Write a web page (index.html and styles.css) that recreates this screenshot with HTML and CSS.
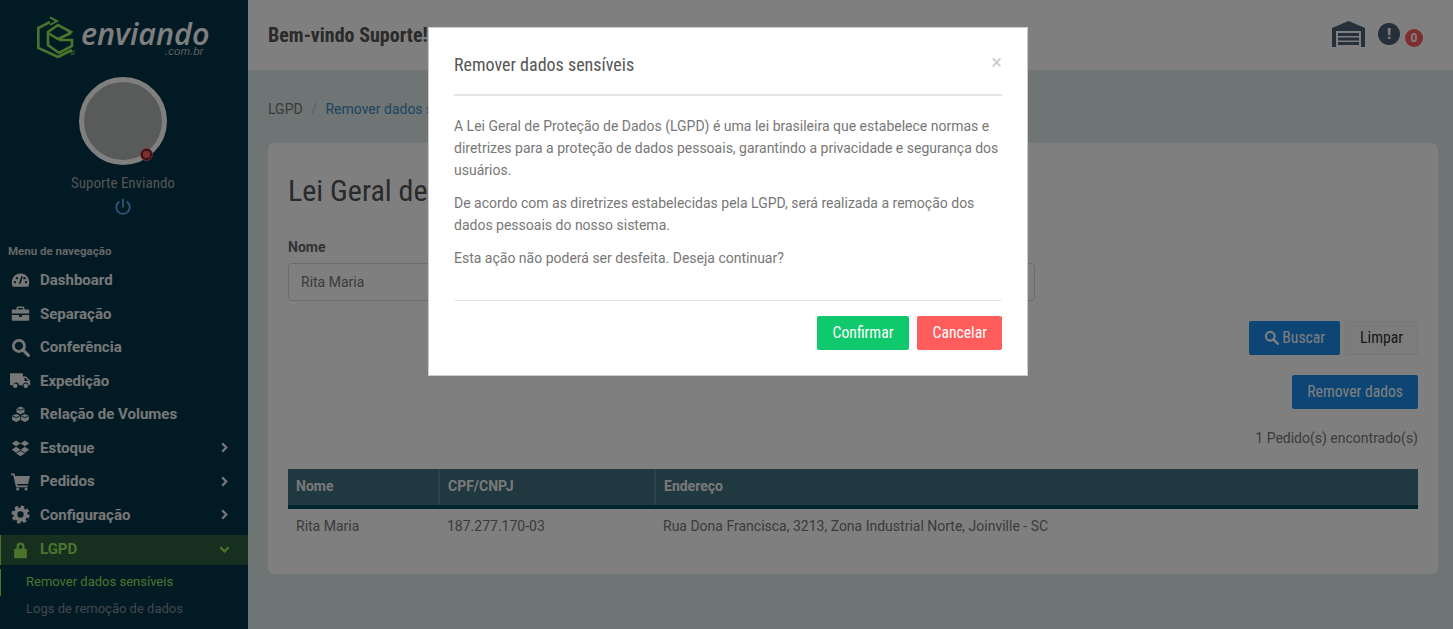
FILE: index.html
```html
<!DOCTYPE html>
<html lang="pt-BR">

<head>
    <meta charset="UTF-8" />
    <meta name="viewport" content="width=device-width, initial-scale=1.0" />
    <title>Remover dados sensíveis</title>
    <link rel="stylesheet" href="styles.css">
</head>

<body>
    <div class="app">
        <!-- menu lateral -->
        <aside class="sidebar">
            <div class="brand">
                <svg class="brand-mark" viewBox="0 0 38 42" fill="none" stroke="#96e85a" stroke-width="2.600">
                    <path d="M13 6 L1.300 12 V32 L21 41 L35 34" />
                    <path d="M13 1.500 L20 5 L13 9" stroke-width="2" />
                    <path d="M30 19 L34 16 L21 9 L11 16 V29 L22 37 L35 30 V24 H22" />
                    <path d="M11 17 L21 23 L34 17" />
                    <path d="M33 37 L38 34.500 M34 39 L38 37" stroke-width="1" />
                </svg>
                <div class="brand-text">
                    <span class="brand-name">enviando</span>
                    <span class="brand-sub">.com.br</span>
                </div>
            </div>
            <div class="avatar">
                <span class="avatar-status"></span>
            </div>
            <div class="user-name">Suporte Enviando</div>
            <svg class="power" viewBox="0 0 24 24" fill="none" stroke="#5fb4ff" stroke-width="2" stroke-linecap="round">
                <path d="M12 3v9" />
                <path d="M7 6a8 8 0 1 0 10 0" />
            </svg>
            <div class="nav-title">Menu de navegação</div>
            <ul class="nav">
                <li class="nav-item">
                    <svg class="nav-icon" viewBox="0 0 24 24"><path d="M12 3C5.400 3 1 8.400 1 14.500c0 2.200.5 4 1.500 5.500h19c1-1.500 1.500-3.300 1.500-5.500C23 8.400 18.600 3 12 3z" /><path d="M11 16 L14 6.500" class="cut" /><circle cx="5" cy="14" r="1.500" class="hole" /><circle cx="7.500" cy="9" r="1.500" class="hole" /><circle cx="19" cy="14" r="1.500" class="hole" /><circle cx="17" cy="9" r="1.500" class="hole" /></svg>
                    Dashboard
                </li>
                <li class="nav-item">
                    <svg class="nav-icon" viewBox="0 0 24 24"><path d="M9 3h6a2 2 0 0 1 2 2v2h5a1 1 0 0 1 1 1v4H1V8a1 1 0 0 1 1-1h5V5a2 2 0 0 1 2-2zm0 2v2h6V5zM1 14h9v2h4v-2h9v6a1 1 0 0 1-1 1H2a1 1 0 0 1-1-1z" /></svg>
                    Separação
                </li>
                <li class="nav-item">
                    <svg class="nav-icon" viewBox="0 0 24 24"><circle cx="10" cy="10" r="7" fill="none" stroke="currentColor" stroke-width="3.600" /><path d="M15 15l7 7" stroke="currentColor" stroke-width="4" stroke-linecap="round" /></svg>
                    Conferência
                </li>
                <li class="nav-item">
                    <svg class="nav-icon wide" viewBox="0 0 26 24"><path d="M1 3h14a1 1 0 0 1 1 1v3h4l5 5.500V18h-2a3.500 3.500 0 0 0-7 0h-5a3.500 3.500 0 0 0-7 0H1a1 1 0 0 1-1-1V4a1 1 0 0 1 1-1z" /><circle cx="6.500" cy="18.500" r="2.800" /><circle cx="19.500" cy="18.500" r="2.800" /><path d="M18 9h1.500l3 3.500H18z" class="hole" /></svg>
                    Expedição
                </li>
                <li class="nav-item">
                    <svg class="nav-icon" viewBox="0 0 24 24"><path d="M12 2l5 2.200v5.300l-5 2.200-5-2.200V4.200zM6.500 11.500l5 2.200V19l-5 2.500L1.500 19v-5.300zM17.500 11.500l5 2.200V19l-5 2.500-5-2.500v-5.300z" /><path d="M7 4.500l5 2 5-2M2 14l4.500 2 4.500-2M13 14l4.500 2 4.500-2" class="cut thin" /></svg>
                    Relação de Volumes
                </li>
                <li class="nav-item">
                    <svg class="nav-icon" viewBox="0 0 24 24"><path d="M6.500 3L12 6.800 6.500 10.500 1 6.800zM17.500 3L23 6.800l-5.500 3.700L12 6.800zM6.500 11L12 14.700l-5.500 3.800L1 14.700zM17.500 11L23 14.700l-5.500 3.800L12 14.700zM6.500 19.500L12 16l5.500 3.500L12 23z" /></svg>
                    Estoque
                    <svg class="chev" viewBox="0 0 10 12"><path d="M2.500 1.500L7 6l-4.500 4.500" /></svg>
                </li>
                <li class="nav-item">
                    <svg class="nav-icon" viewBox="0 0 24 24"><path d="M0 2h4.500l.7 3H24l-2.500 10H7.800l.4 2H21v2.200H6.300L2.900 4.200H0z" /><circle cx="8.500" cy="21.500" r="2" /><circle cx="19" cy="21.500" r="2" /></svg>
                    Pedidos
                    <svg class="chev" viewBox="0 0 10 12"><path d="M2.500 1.500L7 6l-4.500 4.500" /></svg>
                </li>
                <li class="nav-item">
                    <svg class="nav-icon" viewBox="0 0 24 24"><circle cx="12" cy="12" r="6.500" fill="none" stroke="currentColor" stroke-width="5" /><circle cx="12" cy="12" r="9.500" fill="none" stroke="currentColor" stroke-width="4" stroke-dasharray="4.200 3.260" /></svg>
                    Configuração
                    <svg class="chev" viewBox="0 0 10 12"><path d="M2.500 1.500L7 6l-4.500 4.500" /></svg>
                </li>
                <li class="nav-item active">
                    <svg class="nav-icon" viewBox="0 0 24 24"><path d="M7 11V8a5 5 0 0 1 10 0v3h1.500A1.500 1.500 0 0 1 20 12.500v9a1.500 1.500 0 0 1-1.500 1.500h-13A1.500 1.500 0 0 1 4 21.500v-9A1.500 1.500 0 0 1 5.500 11zm3 0h4V8a2 2 0 0 0-4 0z" /></svg>
                    LGPD
                    <svg class="chev" viewBox="0 0 12 10"><path d="M1.500 2.500L6 7l4.500-4.500" /></svg>
                </li>
            </ul>
            <ul class="subnav">
                <li class="subnav-item current">Remover dados sensíveis</li>
                <li class="subnav-item">Logs de remoção de dados</li>
            </ul>
        </aside>

        <div class="main">
            <header class="topbar">
                <h1 class="welcome">Bem-vindo Suporte!</h1>
                <div class="top-icons">
                    <svg class="warehouse" viewBox="0 0 33 26"><path d="M0 26V7L16.500 0 33 7v19h-4V10H4v16z" /><path d="M6 12h21v3H6zM6 16.500h21v3H6zM6 21h21v3H6z" /></svg>
                    <span class="alert-dot">!</span>
                    <span class="badge">0</span>
                </div>
            </header>

            <div class="content">
                <div class="breadcrumb">
                    <span>LGPD</span>
                    <span class="sep">/</span>
                    <a href="javascript:;">Remover dados sensíveis</a>
                </div>

                <section class="card">
                    <h2 class="card-title">Lei Geral de Proteção de Dados</h2>
                    <div class="field">
                        <label class="field-label">Nome</label>
                        <div class="field-input">Rita Maria</div>
                    </div>
                    <div class="actions">
                        <button class="btn btn-blue">
                            <svg class="btn-icon" viewBox="0 0 24 24"><circle cx="10" cy="10" r="7" fill="none" stroke="currentColor" stroke-width="3.400" /><path d="M15 15l7 7" stroke="currentColor" stroke-width="3.800" stroke-linecap="round" /></svg>
                            Buscar
                        </button>
                        <button class="btn btn-light">Limpar</button>
                    </div>
                    <div class="actions">
                        <button class="btn btn-blue">Remover dados</button>
                    </div>
                    <div class="count">1 Pedido(s) encontrado(s)</div>
                    <table class="grid">
                        <thead>
                            <tr>
                                <th class="col-name">Nome</th>
                                <th class="col-doc">CPF/CNPJ</th>
                                <th>Endereço</th>
                            </tr>
                        </thead>
                        <tbody>
                            <tr>
                                <td>Rita Maria</td>
                                <td>187.277.170-03</td>
                                <td>Rua Dona Francisca, 3213, Zona Industrial Norte, Joinville - SC</td>
                            </tr>
                        </tbody>
                    </table>
                </section>
            </div>
        </div>
    </div>

    <!-- modal de confirmacao -->
    <div class="backdrop">
        <div class="modal">
            <div class="modal-head">
                <h3 class="modal-title">Remover dados sensíveis</h3>
                <span class="modal-close">×</span>
            </div>
            <div class="modal-body">
                <p>A Lei Geral de Proteção de Dados (LGPD) é uma lei brasileira que estabelece normas e diretrizes para a proteção de dados pessoais, garantindo a privacidade e segurança dos usuários.</p>
                <p>De acordo com as diretrizes estabelecidas pela LGPD, será realizada a remoção dos dados pessoais do nosso sistema.</p>
                <p>Esta ação não poderá ser desfeita. Deseja continuar?</p>
            </div>
            <div class="modal-foot">
                <button class="btn btn-green">Confirmar</button>
                <button class="btn btn-red">Cancelar</button>
            </div>
        </div>
    </div>
</body>

</html>
```

FILE: styles.css
```css
* {
    margin: 0;
    padding: 0;
    box-sizing: border-box;
}

html,
body {
    height: 100%;
    overflow: hidden;
}

body {
    font-family: Roboto, "Liberation Sans", sans-serif;
    font-size: 14px;
    color: #777;
    background-color: #dee9e9;
}

li {
    list-style: none;
}

.app {
    display: flex;
    height: 629px;
}

/* menu lateral */
.sidebar {
    flex: 0 0 248px;
    height: 629px;
    overflow: hidden;
    background-color: #023448;
    color: #f2f2f2;
}

.brand {
    display: flex;
    gap: 6px;
    height: 62px;
    padding: 16px 0 0 37px;
}

.brand-mark {
    width: 38px;
    height: 42px;
}

.brand-text {
    display: flex;
    flex-direction: column;
    align-items: flex-end;
}

.brand-name {
    margin-top: 4px;
    font-family: "Open Sans", sans-serif;
    font-style: italic;
    font-weight: 600;
    font-size: 30.500px;
    line-height: 27px;
    color: #fff;
}

.brand-sub {
    margin-right: 6px;
    font-family: "Liberation Sans", sans-serif;
    font-style: italic;
    font-size: 11.500px;
    line-height: 8px;
    color: #bbb;
}

.avatar {
    position: relative;
    width: 88px;
    height: 88px;
    margin: 15px 0 0 79px;
    border: 5px solid #fff;
    border-radius: 50%;
    background-color: #b3b6b6;
}

.avatar-status {
    position: absolute;
    right: 9px;
    bottom: -1px;
    width: 13px;
    height: 13px;
    border: 1px solid #ff5c5c;
    border-radius: 50%;
    background: radial-gradient(circle, #ff5c5c 0 3.5px, #5a2a30 4px);
}

.user-name {
    width: 246px;
    margin-top: 9px;
    font-family: "Roboto Condensed", Roboto, sans-serif;
    font-size: 15px;
    line-height: 18px;
    text-align: center;
    color: #aaa;
}

.power {
    display: block;
    width: 20px;
    height: 20px;
    margin: 5px 0 0 113px;
}

.nav-title {
    margin: 27px 0 0 8px;
    font-size: 11.500px;
    font-weight: 700;
    line-height: 15px;
    color: #ccc;
}

.nav {
    margin-top: 4.500px;
}

.nav-item {
    display: flex;
    align-items: center;
    height: 33.5px;
    padding: 0 18px 0 11px;
    font-size: 15px;
    font-weight: 700;
    color: #eee;
}

.nav-icon {
    flex: 0 0 19px;
    width: 19px;
    height: 19px;
    margin-right: 10px;
    fill: currentColor;
}

.nav-icon.wide {
    flex-basis: 21px;
    width: 21px;
    height: 21px;
    margin: 0 9px 0 -1px;
}

.cut {
    fill: none;
    stroke: #023448;
    stroke-width: 2;
}

.cut.thin {
    stroke-width: 1.200;
}

.hole {
    fill: #023448;
}

.chev {
    width: 11px;
    height: 11px;
    margin-left: auto;
    fill: none;
    stroke: currentColor;
    stroke-width: 2.400;
}

.nav-item.active {
    height: 30px;
    margin-top: 3.500px;
    padding: 0 18px 2px 10px;
    border-left: 1px solid #96e85a;
    background-color: #2c5f3e;
    color: #96e85a;
}

.subnav {
    margin-top: 4px;
}

.subnav-item {
    height: 27px;
    padding-left: 26px;
    font-size: 13px;
    line-height: 25px;
    color: #8a9098;
}

.subnav-item.current {
    border-left: 1px solid #96e85a;
    padding-left: 25px;
    color: #96e85a;
}

/* area principal */
.main {
    flex: 1;
    min-width: 0;
}

.topbar {
    display: flex;
    align-items: center;
    justify-content: space-between;
    height: 70px;
    padding: 0 30px 0 20px;
    background-color: #fff;
}

.welcome {
    font-family: "Roboto Condensed", Roboto, sans-serif;
    font-size: 20px;
    font-weight: 700;
    color: #555;
}

.top-icons {
    display: flex;
    align-items: flex-start;
    height: 26px;
    margin-top: -2px;
}

.warehouse {
    width: 33px;
    height: 26px;
    fill: #4a6074;
}

.alert-dot {
    width: 22px;
    height: 22px;
    margin: 2px 0 0 13px;
    border-radius: 50%;
    background-color: #4a6074;
    color: #fff;
    font-size: 15px;
    font-weight: 900;
    line-height: 22px;
    text-align: center;
}

.badge {
    width: 18px;
    height: 18px;
    margin: 8px 0 0 5px;
    border-radius: 50%;
    background-color: #ff5c5c;
    color: #fff;
    font-size: 12px;
    font-weight: 700;
    line-height: 18px;
    text-align: center;
}

.content {
    padding: 30px 15px 0 20px;
}

.breadcrumb {
    display: flex;
    gap: 8.500px;
    line-height: 18px;
}

.breadcrumb .sep {
    color: #bbb;
}

.breadcrumb a {
    color: #3b8ac4;
    text-decoration: none;
}

.card {
    height: 431px;
    margin-top: 25px;
    padding: 29px 20px 0;
    border-radius: 6px;
    background-color: #fff;
}

.card-title {
    padding-top: 1px;
    font-family: "Roboto Condensed", Roboto, sans-serif;
    font-size: 30px;
    font-weight: 400;
    line-height: 36px;
    color: #555;
}

.field {
    width: 747px;
    margin-top: 29px;
}

.field-label {
    display: block;
    font-weight: 700;
    line-height: 18px;
    color: #666;
}

.field-input {
    height: 38px;
    margin-top: 7px;
    padding: 0 12px;
    border: 1px solid #d8d8d8;
    border-radius: 4px;
    line-height: 36px;
}

.actions {
    display: flex;
    justify-content: flex-end;
    gap: 5px;
    margin-top: 20px;
}

.btn {
    height: 34px;
    padding: 0 14px 2px;
    border: 1px solid transparent;
    border-radius: 2px;
    font-family: "Roboto Condensed", Roboto, sans-serif;
    font-size: 15.700px;
    color: #fff;
}

.btn-icon {
    width: 15px;
    height: 15px;
    vertical-align: -2px;
}

.btn-blue {
    background-color: #1a8cea;
}

.btn-light {
    border-color: #eee;
    background-color: #f8f8f8;
    color: #333;
}

.btn-green {
    padding: 0 15px 2px;
    background-color: #10c96c;
}

.btn-red {
    background-color: #ff5c5c;
}

.count {
    margin-top: 20px;
    line-height: 18px;
    text-align: right;
}

.grid {
    width: 100%;
    margin-top: 22px;
    border-collapse: collapse;
}

.grid th {
    height: 38px;
    padding: 0 8px 2px;
    border-bottom: 4px solid #004a5c;
    border-left: 2px solid #58889f;
    background-color: #40707f;
    color: #f0f0f0;
    font-weight: 700;
    text-align: left;
}

.grid th:first-child {
    border-left: 0;
}

.col-name {
    width: 151px;
}

.col-doc {
    width: 216px;
}

.grid td {
    height: 35px;
    padding: 0 8px;
}

/* modal */
.backdrop {
    position: fixed;
    top: 0;
    left: 0;
    right: 0;
    bottom: 0;
    display: flex;
    justify-content: center;
    align-items: flex-start;
    background-color: rgba(0, 0, 0, 0.5);
}

.modal {
    width: 600px;
    height: 349px;
    margin: 27px 0 0 3px;
    padding: 0 25px;
    border: 1px solid #ccc;
    background-color: #fff;
}

.modal-head {
    display: flex;
    justify-content: space-between;
    height: 68px;
    border-bottom: 2px solid #e5e5e5;
}

.modal-title {
    padding-top: 25px;
    font-family: "Roboto Condensed", Roboto, sans-serif;
    font-size: 18px;
    font-weight: 400;
    line-height: 24px;
    color: #555;
}

.modal-close {
    padding-top: 22px;
    font-size: 20px;
    line-height: 24px;
    color: #ccc;
}

.modal-body {
    height: 205px;
    padding-top: 19px;
    border-bottom: 1px solid #e5e5e5;
    line-height: 22px;
}

.modal-body p {
    margin-bottom: 11px;
}

.modal-foot {
    display: flex;
    justify-content: flex-end;
    gap: 8px;
    margin-top: 15px;
}
```
